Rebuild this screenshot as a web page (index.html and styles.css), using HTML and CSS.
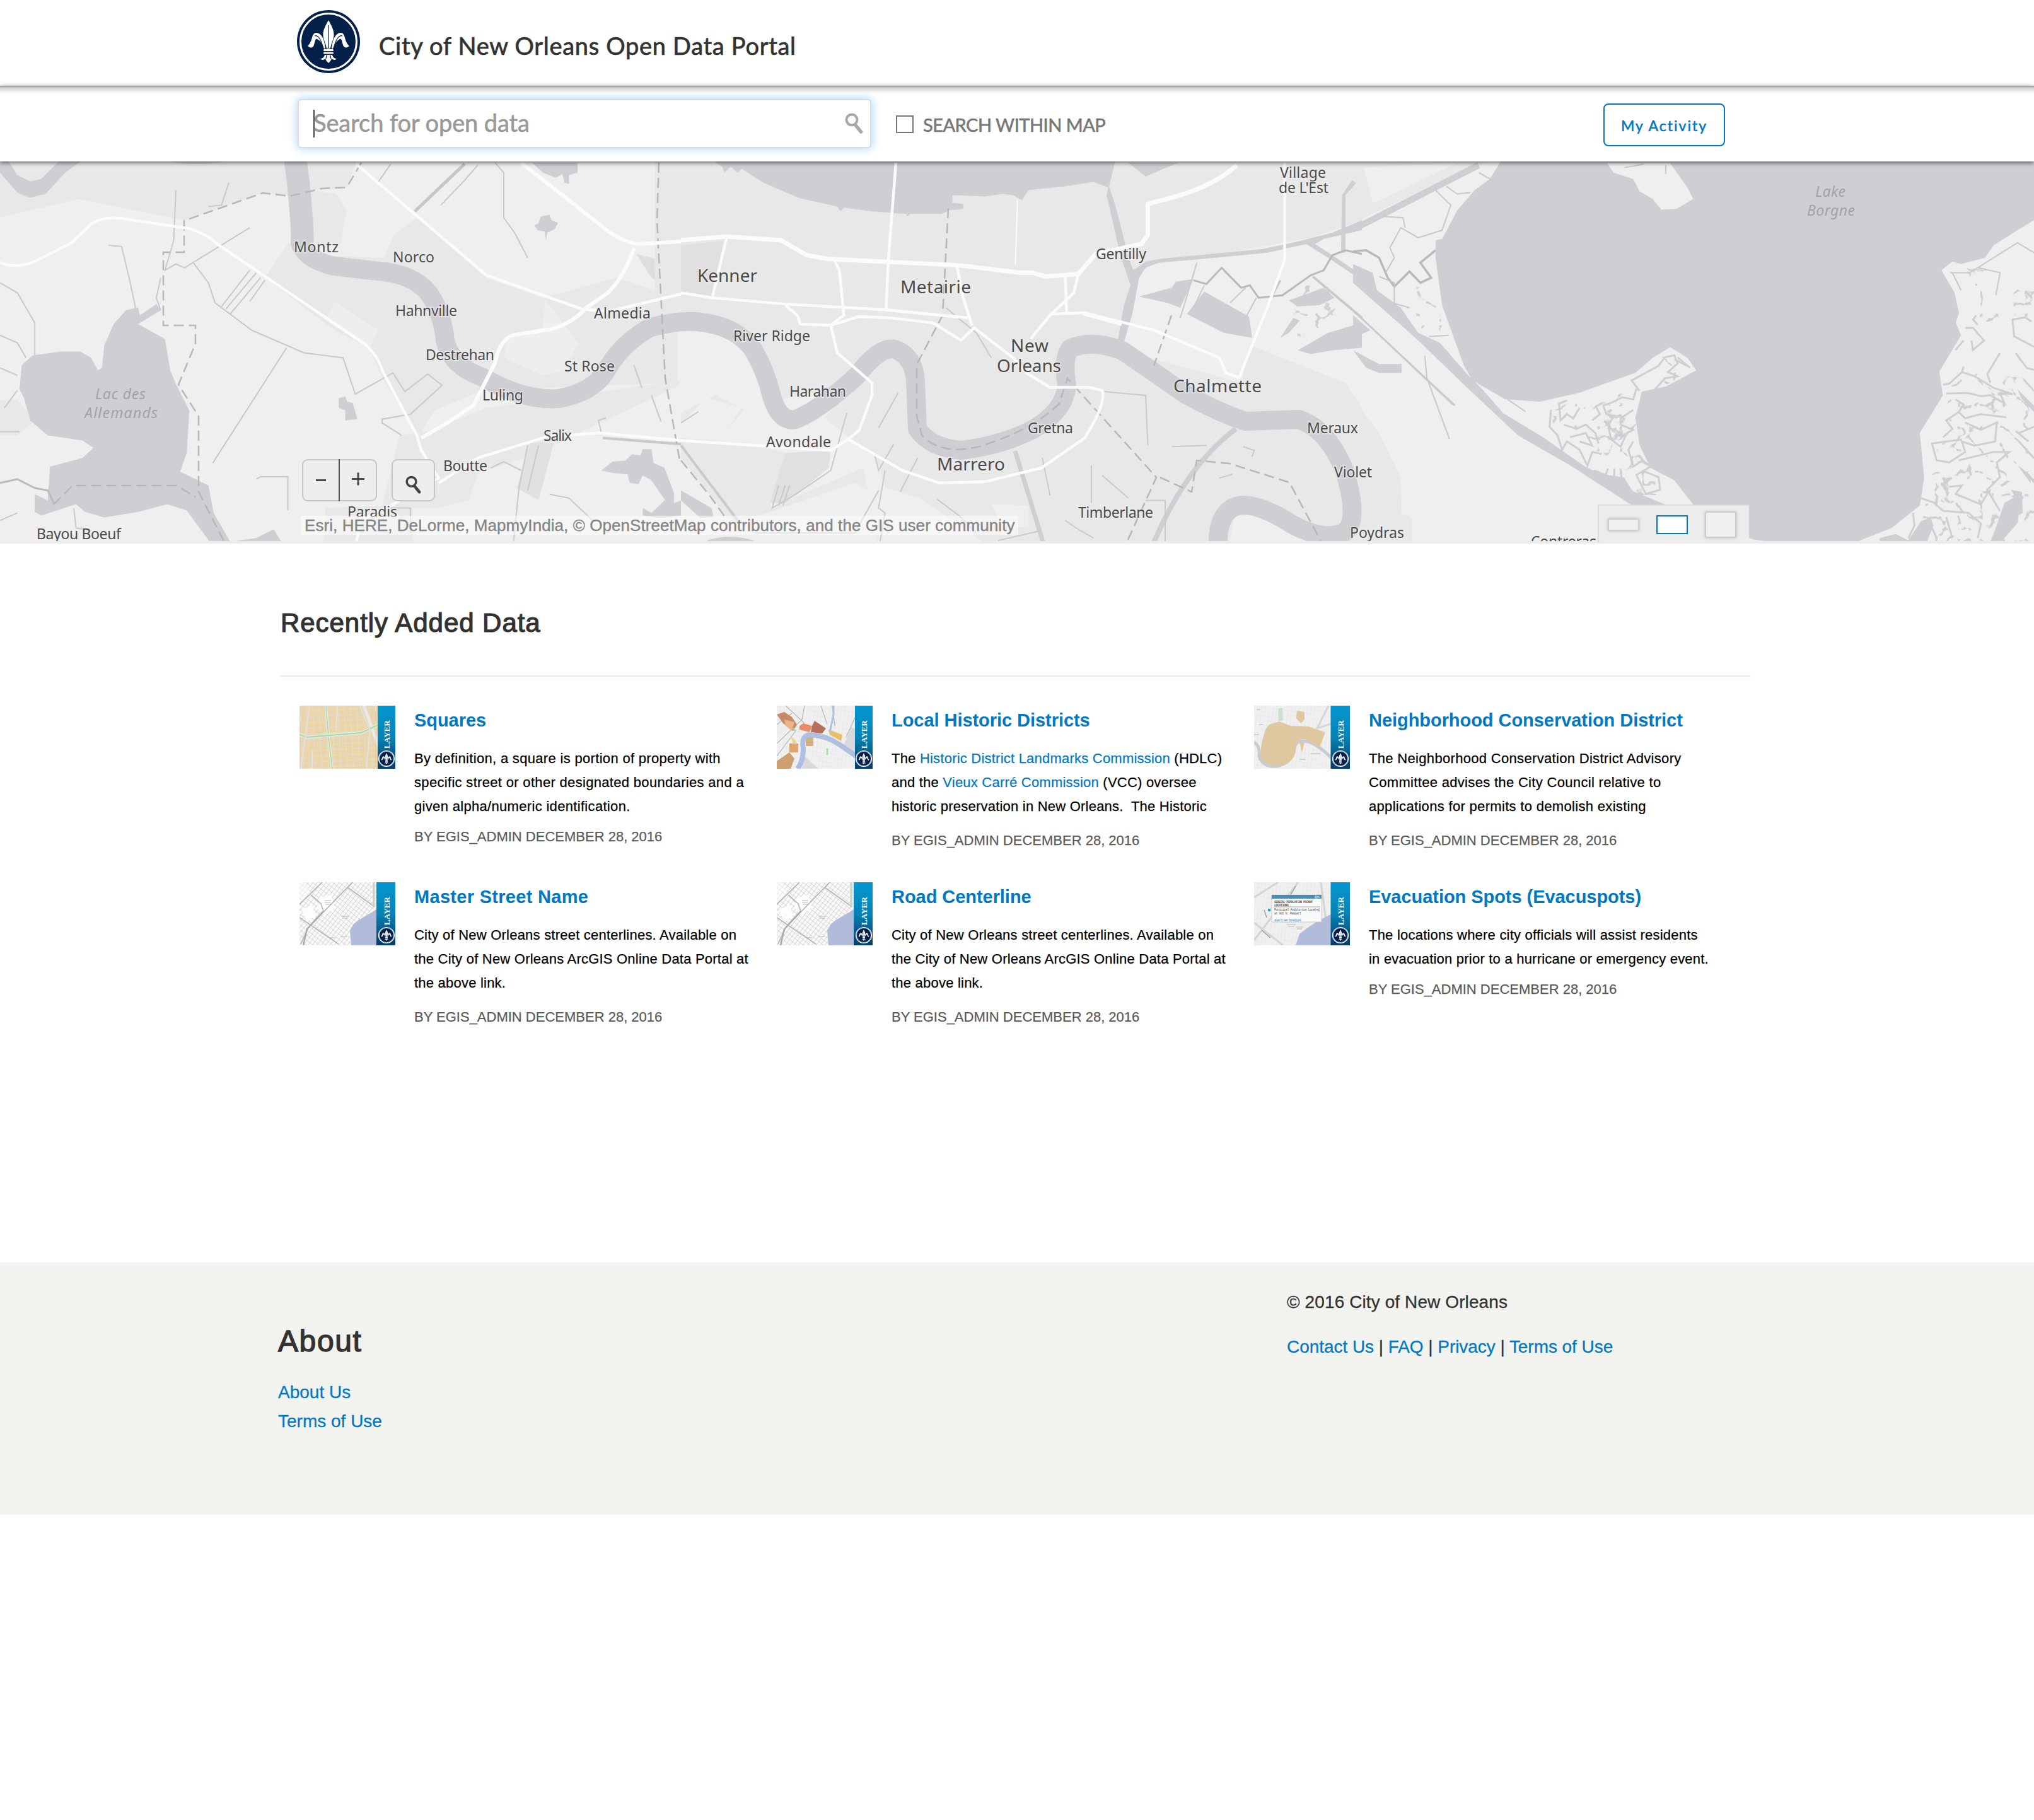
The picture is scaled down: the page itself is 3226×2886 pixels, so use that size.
FILE: index.html
```html
<!DOCTYPE html>
<html lang="en">
<head>
<meta charset="utf-8">
<title>City of New Orleans Open Data Portal</title>
<link rel="stylesheet" href="styles.css">
</head>
<body>
<svg class="defs" width="0" height="0" aria-hidden="true">
  <defs>
    <symbol id="seal" viewBox="0 0 100 100">
      <circle cx="50" cy="50" r="50" fill="#03204a"/>
      <circle cx="50" cy="50" r="44.500" fill="none" stroke="#fff" stroke-width="3"/>
      <g fill="#fff">
        <path d="M50 16C45 25 41 32 41.500 40C42 48 46 53 47 61H53C54 53 58 48 58.500 40C59 32 55 25 50 16Z"/>
        <path d="M45 61C44 49 40 37 31 36C22 36 26 49 17 57C21 61 26 60 27 55C29 49 29 45 32 46C38 49 40 54 43 61Z"/>
        <path d="M55 61C56 49 60 37 69 36C78 36 74 49 83 57C79 61 74 60 73 55C71 49 71 45 68 46C62 49 60 54 57 61Z"/>
        <rect x="42" y="62" width="16" height="3" rx="1.500"/>
        <rect x="42" y="66.500" width="16" height="3" rx="1.500"/>
        <path d="M44 71H56C57 75 60 77 63 77C61 80 57 79 55 77C54 80 52 82 50 84C48 82 46 80 45 77C43 79 39 80 37 77C40 77 43 75 44 71Z"/>
      </g>
      <g fill="none" stroke="#03204a">
        <path d="M50 24V60M46 77L47.500 71M54 77L52.500 71" stroke-width="1.200"/>
        <path d="M41 58C38 46 33 39 28 41M59 58C62 46 67 39 72 41" stroke-width="1.200"/>
      </g>
    </symbol>
    <symbol id="lens" viewBox="0 0 30 34">
      <circle cx="11" cy="11" r="8.500" fill="none" stroke="currentColor" stroke-width="4"/>
      <path d="M16.500 19L25.500 30" stroke="currentColor" stroke-width="5.500" stroke-linecap="round"/>
    </symbol>
    <linearGradient id="band" x1="0" y1="0" x2="0" y2="1">
      <stop offset="0" stop-color="#0597d2"/><stop offset=".5" stop-color="#0683b4"/><stop offset="1" stop-color="#053a68"/>
    </linearGradient>
    <symbol id="layer-tag" viewBox="0 0 28 100">
      <rect width="28" height="100" fill="url(#band)"/>
      <text class="tag-text" transform="translate(18.500 68) rotate(-90)" textLength="45">LAYER</text>
      <use href="#seal" x="1" y="71" width="26" height="26"/>
      <circle cx="14" cy="84" r="12.500" fill="none" stroke="#fff" stroke-width="1.200"/>
    </symbol>
    <pattern id="blocks" width="10" height="9" patternUnits="userSpaceOnUse" patternTransform="rotate(-3)">
      <rect width="10" height="9" fill="#ebd5a6"/><path d="M0 0H10M0 0V9" stroke="#e2dcd2" stroke-width="2"/>
    </pattern>
    <pattern id="streets" width="5.500" height="6.500" patternUnits="userSpaceOnUse" patternTransform="rotate(38)">
      <rect width="5.500" height="6.500" fill="#fafafa"/><path d="M0 0H5.500M0 0V6.500" stroke="#bdbdbd" stroke-width="1"/>
    </pattern>
    <pattern id="faint" width="6" height="7" patternUnits="userSpaceOnUse" patternTransform="rotate(8)">
      <rect width="6" height="7" fill="#f0f0f0"/><path d="M0 0H6M0 0V7" stroke="#e2e2e4" stroke-width=".8"/>
    </pattern>
    <symbol id="thumb-streets" viewBox="0 0 152 100">
      <rect width="152" height="100" fill="url(#streets)"/>
      <path d="M8 0H0V34L14 20L34 44Z" fill="#fbfbfb" opacity=".5"/>
      <path d="M32 24L50 20L56 40L40 52L28 40Z" fill="#fdfdfd"/>
      <path d="M4 44L20 36L26 52L12 64Z" fill="#fdfdfd"/>
      <path d="M0 35L36 0M18 20L34 34L38 46M0 56L62 98M76 8L118 38M84 0L14 72L2 98" fill="none" stroke="#b9bab5" stroke-width="1.800"/>
      <path d="M38 46L12 74L6 100" fill="none" stroke="#a9aca3" stroke-width="2.400"/>
      <path d="M118 0V40" stroke="#ccd0c6" stroke-width="3"/>
      <path d="M124 38L100 58L86 72L92 76L118 46Z" fill="#fcfcfc"/>
      <path d="M124 42L104 54L94 60L86 66L80 76L82 100H124Z" fill="#b1bcda"/>
      <path d="M40 29H50M40 32H49M41 35H50M66 54H78M68 57H77M66 86H76M46 88H56" stroke="#a5a5a5" stroke-width=".8"/>
    </symbol>
    <filter id="creeks" x="0" y="0" width="1" height="1" color-interpolation-filters="sRGB">
      <feTurbulence type="turbulence" baseFrequency=".028 .028" numOctaves="3" seed="7" result="n"/>
      <feColorMatrix in="n" type="matrix" values="0 0 0 0 .812  0 0 0 0 .808  0 0 0 0 .827  -18 0 0 0 2.500" result="m"/>
      <feComposite in="m" in2="SourceAlpha" operator="in"/>
    </filter>
  </defs>
</svg>

<header class="masthead">
  <svg class="logo"><use href="#seal"/></svg>
  <h1 class="site-title">City of New Orleans Open Data Portal</h1>
</header>

<div class="searchbar">
  <div class="search-field"><span class="caret"></span><span class="placeholder">Search for open data</span><svg class="lens"><use href="#lens"/></svg></div>
  <label class="within"><span class="box"></span><span class="within-text">SEARCH WITHIN MAP</span></label>
  <button class="activity">My Activity</button>
</div>

<section class="map">
<svg class="map-art" viewBox="0 256 3226 602">
  <rect y="256" width="3226" height="602" fill="#efefef"/>
  <!-- built-up areas -->
  <g fill="#e8e8e8">
    <g transform="translate(0 250) scale(.6888 .3968)">
      <path d="M0 15H820L800 118L740 125L670 152L605 142L425 250L180 165L0 240Z"/>
      <path d="M715 130L775 145L798 210L785 345L700 350Z"/>
      <path d="M665 340L610 480L770 690L850 760L880 880L965 1110L1000 1010L1110 930L1560 900V560L1420 480L1250 560L1120 480L960 240L905 310L885 400L700 390Z"/>
      <path d="M770 575L870 690L850 765L750 650Z" fill="#eee"/>
      <path d="M1255 565L1330 740L1300 850L1250 870L1160 800L1170 710L1250 680Z" fill="#eee"/>
      <path d="M920 1110L880 1390L750 1400L745 1540H950V1400H1010L1080 1370L1100 1260L1210 1200L1560 915L1568 890L1120 1000L990 1090Z"/>
      <path d="M1465 385L1568 430V545L1500 480Z" fill="#dedede"/><path d="M1220 1140H1275L1240 1370L1190 1320Z" fill="#e1e1e1"/>
      <path d="M0 970H40L80 1050L40 1110H0Z"/>
    </g>
    <g transform="translate(1080 250) scale(.6888 .3968)">
      <path d="M-60 15H1568V250L1450 320L1190 400L1060 420L1040 520L1010 740L1080 800L1290 900L1310 750L1530 900L1568 1000V1540H700L550 1360L470 1320L450 1200L330 1040L400 900L150 1000L80 1140L200 1160L240 1180L205 1400L420 1240L455 1540H150L90 1400L0 1200V1020L100 930L20 890L65 690H-60Z"/>
      <path d="M0 350L105 330L70 560L0 535Z" fill="#e0e0e0"/><path d="M240 1180L345 1170L340 1240L240 1380H205Z" fill="#e0e0e0"/>
      <path d="M15 890L65 690L140 730L180 900L200 1010L150 1010Z" fill="#efefef"/><path d="M0 1060L60 960L140 1000L90 1130L0 1120Z" fill="#efefef"/>
      <path d="M130 1460L400 1300L450 1350V1540H130ZM470 1330L560 1370L540 1540H455ZM715 1385L800 1390V1480L740 1470Z" fill="#efefef"/>
      <path d="M1060 420L1430 350L1490 400V600L1310 750L1150 660L1050 600Z" fill="#efefef"/>
      <path d="M1262 1540L1275 1430L1310 1410L1440 1500L1470 1540Z" fill="#efefef"/>
    </g>
    <g transform="translate(2146 250) scale(.6888 .3968)">
      <path d="M0 15H310L0 260Z"/><path d="M25 40L240 20L75 160L45 180Z" fill="#efefef"/>
      <path d="M0 960L60 1100L110 1280L112 1420L135 1440V1540H0Z"/>
    </g>
  </g>
  <!-- lakes, bayous and the river -->
  <g fill="#cfced3">
    <g transform="translate(0 250) scale(.6888 .3968)">
      <path d="M0 15H20L40 70L70 95L95 85L135 15H185L150 60L105 145L68 160L40 140L0 60Z"/>
      <path d="M290 610L318 598L322 630L360 585L370 610L318 665L380 725L392 850L405 905L436 1010L430 1180L415 1255L480 1310L492 1420L530 1535L590 1520L630 1485L650 1540H485L430 1410L385 1385L320 1415L240 1438L195 1415L175 1385L95 1430L80 1415V1345L110 1370L115 1235L190 1200L215 1160L190 1130L110 1110L70 1050L55 960L45 925L50 830L75 790L140 775L185 775L210 800L225 850L235 840L240 750L262 665Z"/>
      <path d="M390 15Q450 35 520 15Z"/>
      <path d="M1225 20H1330V60L1310 70V105L1300 100L1295 65L1280 80L1250 60Z"/>
      <path d="M1230 270L1240 262L1245 235L1265 228L1270 250L1285 260L1278 285L1260 300L1257 330L1254 295L1238 290Z"/>
      <path d="M780 960L795 955L800 975L812 980L823 1045L795 1050V1010L780 1000Z"/>
      <path d="M1385 1250L1410 1215L1440 1210L1455 1185L1475 1190L1480 1165H1500L1505 1220L1530 1240L1552 1340V1400L1540 1390L1500 1290L1480 1270L1470 1305L1450 1300L1445 1265L1410 1260Z"/>
      <path d="M1480 1400L1500 1420L1530 1370L1545 1385L1568 1370V1430L1520 1440L1480 1430Z"/>
    </g>
    <g transform="translate(1080 250) scale(.6888 .3968)">
      <path d="M80 20L95 35L100 60L115 35L130 60L140 45L190 100L270 160L360 195L368 215L375 200L440 215L518 225L522 235L528 225L600 225L620 210L650 205V185L625 180V150L700 155L740 145L765 150L785 170L800 130L880 115L950 97L985 120L1000 15H80Z"/>
      <path d="M985 110L1000 190L1015 290L1030 400L1042 450L1070 415L1110 403L1220 385L1340 365L1420 335L1500 300L1568 250V290L1480 325L1460 345L1500 390L1568 470V490L1490 400L1440 345L1350 380L1230 400L1100 420L1070 440L1055 480L1040 620L1018 750L1005 740L1020 590L1035 510L1010 380L995 260L980 150Z"/>
      <path d="M1055 555L1130 520L1140 495L1180 485L1160 560L1150 600L1120 580ZM1205 535L1308 635L1315 720L1250 700L1165 625Z"/>
      <path d="M1400 570L1440 545L1480 520L1505 560L1470 590L1420 595ZM1380 720L1410 640L1425 650L1400 700ZM1420 770L1490 700L1568 660V760L1500 770L1450 785Z"/>
      <path d="M1030 20L1145 20L1070 75ZM1545 90L1555 100L1530 150V380H1520L1522 150Z"/>
      <path d="M60 1530Q110 1500 168 1530V1540H60ZM0 1330L70 1400L75 1435L45 1440L0 1370Z"/>
    </g>
    <g transform="translate(2146 250) scale(.6888 .3968)">
      <path d="M340 15H1568V250L1530 290L1475 350L1455 400L1400 425L1380 415L1355 450L1385 540L1395 620L1388 660L1400 710L1350 855L1358 950L1305 1100L1315 1280L1305 1390L1240 1480L1160 1535L980 1540L920 1525L790 1440L785 1390L740 1290L685 1240L660 1150L650 1040L665 935L720 915L790 850L770 800L730 757L690 800L650 860L520 940L430 975L350 965L275 890L255 830L228 700L205 590L190 400V330L205 325L240 210L280 130L315 85Z"/>
      <path d="M585 22L600 60L645 85L660 135L690 165L710 208L745 205L783 165L770 120L730 22Z" fill="#efefef"/>
      <path d="M0 425L45 460L55 530L110 600L150 700L200 740L260 860L300 930L345 1020L440 1120L530 1230L640 1330L720 1387H640L500 1230L380 1110L260 915L150 730L0 500Z"/>
      <path d="M0 630L40 690L0 720ZM0 770L60 825H112V860H60L30 840ZM1530 1230L1560 1270V1300ZM1500 1380L1540 1340L1530 1460L1490 1540L1480 1480Z"/>
    </g>
  </g>
  <g fill="none" stroke="#cfced3" stroke-linejoin="round">
    <path d="M468 256Q478 320 476 385Q485 412 530 422L600 430Q655 434 680 465Q702 496 706 540Q715 580 765 598Q830 636 886 632Q940 622 960 590Q985 545 1030 520Q1080 505 1120 512Q1170 520 1195 555Q1215 590 1223 625Q1235 670 1262 665Q1300 650 1360 595Q1395 548 1420 554Q1450 566 1452 605L1455 680Q1475 710 1525 714Q1590 706 1640 680Q1690 650 1692 610Q1685 570 1697 553Q1730 537 1780 556Q1830 590 1880 625Q1935 655 1975 668L2060 665Q2105 680 2132 745Q2158 830 2130 845Q2100 858 2050 832Q1985 790 1955 805Q1930 820 1932 865" stroke-width="30"/>
    <path d="M468 250Q478 320 480 385" stroke-width="36"/>
    <path d="M1960 680Q1880 740 1828 865" stroke-width="8"/>
    <path d="M2146 364L2345 262" stroke-width="10"/><path d="M1610 715L1655 862" stroke-width="7"/>
    <path d="M2146 492L2306 643" stroke-width="3"/>
  </g>
  <!-- marsh creeks -->
  <g filter="url(#creeks)" fill="#000">
    <path d="M2455 645L2520 635L2590 620L2595 680L2600 720L2625 750L2635 785L2590 785L2540 725L2470 690Z"/>
    <path d="M2605 580L2650 560L2680 588L2640 612Z"/>
    <path d="M3120 425L3165 430L3170 510L3125 510ZM3190 440H3226V520L3195 500ZM3100 590L3226 600V858H3000L3050 820L3060 770L3075 700Z"/>
    <path d="M2236 455L2278 455L2288 525L2250 520ZM2040 455L2110 450L2120 500L2060 540Z"/>
  </g>
  <g transform="translate(2440 500) scale(.5013 .3333)" fill="none" stroke="#cfced3" stroke-width="3">
    <path d="M320 360L295 310L380 240L400 200L430 190L440 230L410 270L440 290L400 300L370 350M440 200L480 250M430 210L470 240M310 350L300 400L265 390L240 410L205 430L215 470L240 480L220 520L230 590L260 625L280 560L300 545L260 520V490L300 450M180 430L195 470L170 500M90 405L65 420L70 500L90 470L110 490L130 440M40 450L35 530L60 570L75 640L90 600L130 640L155 715L170 650L200 660M300 600L285 640L300 720L330 690L355 720L310 760L340 850L385 830L380 770L330 740M80 520L120 540L150 520L180 560L190 610M100 580L150 560L170 620L130 600M220 730L210 770M240 730V780M260 730L265 800"/>
    <path d="M1385 0L1375 20L1390 45M1350 60H1375L1410 120L1375 165L1370 120M1345 120L1320 165M1560 30L1540 10L1500 20L1505 100L1568 150M1280 330L1300 325L1340 270L1345 245M1340 270L1380 290L1440 345L1500 375L1460 370L1475 420L1430 380L1400 385L1360 370L1290 372M1510 180L1545 250L1568 260M1430 320L1420 280L1460 180M1320 400L1345 425L1330 460L1350 490L1400 470L1480 485M1330 460L1290 500L1310 540L1280 580M1350 510L1400 545L1450 510L1445 600L1380 620L1340 600L1350 650L1300 700L1260 690L1245 610L1340 590M1330 690L1440 650L1490 650L1450 700L1460 770L1420 830L1460 930M1300 815L1340 810L1320 850L1400 900L1420 850M1210 870L1250 890L1280 930L1360 940L1400 990L1390 1060M1185 940L1190 1000L1170 1060M1230 960L1260 1060M1290 960L1310 1060M1520 560L1568 530M1520 600L1568 680M1510 550L1550 600"/>
  </g>
  <g transform="translate(2440 500) scale(.5013 .3333)" fill="#cfced3">
    <path d="M1515 350L1530 400L1568 460V430ZM1520 715L1545 760L1568 800V780ZM1495 830L1530 840L1532 940L1490 980L1460 1075H1430L1450 1000L1500 940L1515 880Z"/>
    <path d="M1080 1060L1130 1040L1170 1070L1210 980L1240 960L1250 1000L1230 1075H1080Z"/>
    <path d="M180 735L220 760L270 770L300 840L380 890H300L160 740Z"/>
  </g>
  <!-- minor streams, canals and tracks -->
  <g fill="none" stroke="#c9c9cb" stroke-width="2">
    <g transform="translate(0 250) scale(.6888 .3968)">
      <path d="M405 130L400 330L380 450L405 425L425 440L575 280M250 350L280 355L300 500L312 600M0 500L40 540L80 660V790M0 710L40 740L60 800M0 840L40 870M40 930L10 1000M0 1095H45"/>
      <path d="M445 420L480 500L495 580L580 690L700 780L790 800L818 945L905 860L932 935L985 865L1018 910L945 1025L880 1045V1060L925 1110M660 760L490 1220M510 595L575 450M520 605L590 460M530 625L600 480M575 575L610 490M370 480L360 560L370 610"/>
      <path d="M1140 20L1160 60V240L1185 300L1215 400M1100 30L1070 90L1015 190M900 25L870 100M480 195L510 190L527 100M1460 830L1478 920M1500 950L1522 1055M1395 1040L1378 1050L1385 1100M590 1285L600 1275H663V1410M1130 1240L1160 1215L1200 1250M1215 1150L1195 1320L1182 1540M1240 1150L1215 1330M1265 1345L1310 1360L1365 1450M900 1400H945V1500M0 1450L40 1420M170 1400L175 1480L210 1490"/>
      <path d="M1070 25L955 215" stroke="#c5c5ca" stroke-width="5"/>
      <path d="M1388 1120L1568 1145" stroke-width="4"/>
      <path d="M0 1300L40 1285L80 1320L110 1330L125 1385" stroke="#bbb" stroke-width="3"/>
    </g>
    <g transform="translate(1080 250) scale(.6888 .3968)">
      <path d="M1188 420L1150 640M1205 510L1180 600M1300 520L1265 580M1325 560L1300 640M610 600L680 700L715 800M500 940L455 1080M382 1020L345 1250L260 1350L210 1400L225 1310M240 1310L225 1390M250 1310L235 1390M490 1145L455 1250L445 1180M545 1200L505 1335M0 1060L40 1015M590 1365L640 1430L680 1500M832 1200L850 1350M945 1230V1380M970 1270L1030 1360M975 935L1070 950L1075 1150M1130 1155L1210 1150M1295 1155L1320 1170L1315 1195M1240 1280L1270 1265M170 1500H400L455 1330M885 1450L910 1480L950 1520M730 1530L830 1490M1070 1370H1115V1540M470 1250L455 1400L470 1420L458 1540"/>
      <path d="M1180 490L1210 505L1245 440L1290 520L1310 510L1330 560L1385 550L1450 470L1480 450L1500 390L1530 370L1568 385" stroke="#b9b9bd" stroke-width="3"/>
      <path d="M1455 475L1568 640M1360 555L1380 490M0 1150L135 1460" stroke-width="4" stroke="#c9c9ce"/>
    </g>
    <g transform="translate(2146 250) scale(.6888 .3968)">
      <path d="M0 375L30 370L60 400L80 480L95 515L130 455L155 500L180 480L155 420L190 370" stroke="#b9b9bd" stroke-width="3.500"/>
      <path d="M190 130L225 190L205 290L150 320L110 280L85 360L95 400L75 460M70 235L115 240L120 280M215 115L240 145L270 140M290 60L320 90M0 610L235 990L225 980M165 790L170 880L222 1125M355 965L397 1015M90 580L130 600M175 715L220 710M60 475L95 500V580"/>
      <path d="M1375 460H1420L1530 340L1568 380M1380 460L1400 530M1440 440L1490 460L1480 550M625 40L670 25M720 30V65"/>
    </g>
  </g>
  <!-- parish boundaries -->
  <g fill="none" stroke="#b7b7b7" stroke-width="2.500" stroke-dasharray="16 8">
    <path d="M573 258L550 297L510 299L460 311L417 306L292 350V400H259V516H310V545L283 610L315 660V780L355 858M85 800L115 770H280L310 788"/>
    <path d="M1045 258L1042 350L1055 600L1078 730M1504 330L1495 500L1454 578V660L1462 690Q1495 725 1560 706Q1640 680 1680 640L1693 600L1834 757L1788 858M1858 500L1830 580M1840 757L1890 780L1898 730L1950 735L2045 765L2095 858M1080 730L1125 785L1150 820"/>
  </g>
  <!-- highways -->
  <g fill="none" stroke="#fbfbfb" stroke-linejoin="round">
    <g transform="translate(0 250) scale(.6888 .3968)" stroke-width="4.500">
      <path d="M0 420Q40 445 80 415L165 340L210 265Q240 230 290 245L440 285Q480 310 500 345L840 745Q870 790 880 850L960 1110L970 1170L1010 1280L900 1390L830 1450L820 1540"/>
      <path d="M1200 20L1405 300Q1440 340 1470 345L1568 335M1460 360Q1440 470 1400 540L1350 600Q1320 660 1270 685L1180 710Q1150 730 1140 820L1090 990L1030 1060L970 1120" stroke-width="6"/>
      <path d="M820 25L1120 470L1340 605L1400 615L1568 545M1010 1300L1100 1200L1260 1115L1380 1100L1568 1130"/>
    </g>
    <g transform="translate(1080 250) scale(.6888 .3968)" stroke-width="4.500">
      <path d="M0 330L105 315L230 330L290 390L340 405L640 430L780 460H810L840 475L915 465L955 385L1060 345L1075 310V185L1140 155Q1230 110 1280 30" stroke-width="7"/>
      <path d="M495 20L478 400L472 610M105 320L72 560L0 540M72 560L240 585L470 608L660 640M240 590L268 630L275 665L345 670L375 630L365 450L350 400M345 670L410 635L480 640L580 660L645 730L675 680L765 800M635 430L650 560L670 670M345 670L360 780L440 900V950L410 1090L385 1125L345 1170L0 1130M385 1125L510 1250L595 1300L700 1295L830 1240L930 1120Q980 980 970 930L940 918H850L795 860L765 800M805 725L850 630L905 540L915 465M885 475L888 620M850 625L930 620L1090 690L1240 800L1255 860L1285 880L1350 600L1390 410V20"/>
      <path d="M925 622L1015 665" stroke-width="6"/>
      <path d="M775 170L770 430" stroke-width="2"/>
    </g>
  </g>
  <g class="town">
    <text x="466" y="400" textLength="71">Montz</text><text x="623" y="416" textLength="66">Norco</text>
    <text x="627" y="501" textLength="98">Hahnville</text><text x="942" y="505" textLength="90">Almedia</text>
    <text x="675" y="571" textLength="109">Destrehan</text><text x="895" y="589" textLength="80">St Rose</text>
    <text x="765" y="635" textLength="65">Luling</text><text x="862" y="699" textLength="45">Salix</text>
    <text x="703" y="747" textLength="70">Boutte</text><text x="551" y="820" textLength="79">Paradis</text>
    <text x="58" y="855" textLength="134">Bayou Boeuf</text><text x="1163" y="541" textLength="122">River Ridge</text>
    <text x="1252" y="629" textLength="90">Harahan</text><text x="1215" y="709" textLength="103">Avondale</text>
    <text x="1630" y="687" textLength="72">Gretna</text><text x="1710" y="821" textLength="119">Timberlane</text>
    <text x="1738" y="411" textLength="80">Gentilly</text><text x="2030" y="282" textLength="73">Village</text>
    <text x="2028" y="306" textLength="79">de L'Est</text><text x="2073" y="687" textLength="81">Meraux</text>
    <text x="2116" y="757" textLength="60">Violet</text><text x="2141" y="853" textLength="86">Poydras</text>
    <text x="2428" y="867" textLength="104">Contreras</text>
  </g>
  <g class="town city">
    <text x="1106" y="447" textLength="95">Kenner</text><text x="1428" y="465" textLength="112">Metairie</text>
    <text x="1603" y="558" textLength="60">New</text><text x="1581" y="590" textLength="102">Orleans</text>
    <text x="1486" y="746" textLength="108">Marrero</text><text x="1861" y="622" textLength="140">Chalmette</text>
  </g>
  <g class="town lake">
    <text x="151" y="633" textLength="80">Lac des</text><text x="134" y="663" textLength="116">Allemands</text>
    <text x="2879" y="312" textLength="48">Lake</text><text x="2866" y="342" textLength="76">Borgne</text>
  </g>
</svg>
  <div class="map-tools">
    <div class="zoom"><svg viewBox="0 0 119 67"><path d="M59 0V67" stroke="#555" stroke-width="2"/><path d="M22 33.500H38M79 31.500H99M89 21.500V41.500" stroke="#4a4a4a" stroke-width="3"/></svg></div>
    <div class="find"><svg><use href="#lens"/></svg></div>
  </div>
  <div class="credits">Esri, HERE, DeLorme, MapmyIndia, © OpenStreetMap contributors, and the GIS user community</div>
  <div class="sizes"><span class="size small"></span><span class="size medium"></span><span class="size large"></span></div>
</section>

<main class="content">
  <h2 class="heading">Recently Added Data</h2>
  <div class="cards">
    <article class="card">
      <svg class="thumb" viewBox="0 0 152 100"><rect width="152" height="100" fill="url(#blocks)"/>
        <path d="M42 0L46 50L52 100" fill="none" stroke="#e9e9e9" stroke-width="4"/><path d="M42 0L46 50L52 100" fill="none" stroke="#a7dca0" stroke-width="1.500"/>
        <path d="M0 46L12 50L98 43L126 30M102 0L126 66" fill="none" stroke="#e9e9e9" stroke-width="5"/><path d="M0 46L12 50L98 43L126 30" fill="none" stroke="#9fdc9d" stroke-width="2"/>
        <path d="M60 0L58 40M96 0L112 40L106 100M16 0L2 100M20 70V100" fill="none" stroke="#e4dfd9" stroke-width="2.500"/>
        <use href="#layer-tag" x="124" width="28" height="100"/></svg>
      <div class="body"><h3>Squares</h3><p class="desc">By definition, a square is portion of property with<br>specific street or other designated boundaries and a<br>given alpha/numeric identification.</p><p class="meta tight">BY EGIS_ADMIN DECEMBER 28, 2016</p></div>
    </article>
    <article class="card">
      <svg class="thumb" viewBox="0 0 152 100"><rect width="152" height="100" fill="url(#faint)"/>
        <path d="M0 30L24 12M0 60L40 22L44 0M0 80L30 40M14 0L44 28M70 0L80 30M92 32L88 0M110 50L128 10" fill="none" stroke="#b5b5b5" stroke-width="1.200"/>
        <path d="M0 14L12 10L24 18L32 30L26 40L10 28Z" fill="#c68a68"/><path d="M12 22L28 26L24 40L14 32Z" fill="#ecb486"/>
        <path d="M36 32L42 28L56 32L52 42L36 38Z" fill="#e98b69"/><path d="M56 32L60 24L78 36L72 44L54 42Z" fill="#b5705c"/>
        <path d="M82 38L104 46L102 56L84 46Z" fill="#e6bf66"/><path d="M46 48H58V64H46Z" fill="#cfb183"/><path d="M20 60H34V74H20Z" fill="#dfa46e"/><path d="M22 48L32 58L26 60Z" fill="#eed878"/>
        <path d="M0 88L20 74L28 84L22 100H0Z" fill="#cf9f70"/><path d="M42 78L66 100H40ZM106 64L118 34L126 38V78Z" fill="#d9d9dd"/>
        <path d="M33 100Q42 88 42 68Q38 46 54 46Q80 48 100 62L126 80" fill="none" stroke="#afbfe2" stroke-width="8"/>
        <path d="M90 0V14L84 42" stroke="#afbfe2" stroke-width="3" fill="none"/><path d="M80 68V78M26 36L30 40" stroke="#a9dda1" stroke-width="3"/>
        <use href="#layer-tag" x="124" width="28" height="100"/></svg>
      <div class="body"><h3>Local Historic Districts</h3><p class="desc narrow">The <a>Historic District Landmarks Commission</a> (HDLC)<br>and the <a>Vieux Carré Commission</a> (VCC) oversee<br>historic preservation in New Orleans.&nbsp; The Historic</p><p class="meta">BY EGIS_ADMIN DECEMBER 28, 2016</p></div>
    </article>
    <article class="card">
      <svg class="thumb" viewBox="0 0 152 100"><rect width="152" height="100" fill="url(#faint)"/>
        <path d="M0 58Q10 64 8 80Q14 98 36 96Q62 90 64 68Q66 54 80 56Q98 58 124 84" fill="none" stroke="#cacad2" stroke-width="5"/>
        <path d="M24 30L40 25L58 32L86 33L113 42L104 66L84 54Q66 50 66 64Q68 86 46 94Q16 98 10 80L12 58L18 38Z" fill="#dfc79f"/>
        <path d="M68 8L80 10V22L74 28L67 20ZM72 58H80L76 74Z" fill="#dfc79f"/>
        <path d="M4 6H10M0 46H8M72 85H82M90 76H106M8 30H14" stroke="#b5b5b5"/><path d="M42 4V24" stroke="#cfdfd0" stroke-width="7"/>
        <path d="M118 0L100 36L124 28" fill="none" stroke="#d5d5da" stroke-width="3"/>
        <use href="#layer-tag" x="123" width="28" height="100"/><path d="M121.500 0H124V100H121.500ZM150 0H152V100H150Z" fill="url(#band)"/></svg>
      <div class="body"><h3>Neighborhood Conservation District</h3><p class="desc">The Neighborhood Conservation District Advisory<br>Committee advises the City Council relative to<br>applications for permits to demolish existing</p><p class="meta">BY EGIS_ADMIN DECEMBER 28, 2016</p></div>
    </article>
    <article class="card">
      <svg class="thumb" viewBox="0 0 152 100"><use href="#thumb-streets"/><use href="#layer-tag" x="124" width="28" height="100"/><path d="M122 0H125V100H122Z" fill="url(#band)"/></svg>
      <div class="body"><h3 class="wide">Master Street Name</h3><p class="desc narrow">City of New Orleans street centerlines. Available on<br>the City of New Orleans ArcGIS Online Data Portal at<br>the above link.</p><p class="meta">BY EGIS_ADMIN DECEMBER 28, 2016</p></div>
    </article>
    <article class="card">
      <svg class="thumb" viewBox="0 0 152 100"><use href="#thumb-streets"/><use href="#layer-tag" x="124" width="28" height="100"/><path d="M122 0H125V100H122Z" fill="url(#band)"/></svg>
      <div class="body"><h3>Road Centerline</h3><p class="desc narrow">City of New Orleans street centerlines. Available on<br>the City of New Orleans ArcGIS Online Data Portal at<br>the above link.</p><p class="meta">BY EGIS_ADMIN DECEMBER 28, 2016</p></div>
    </article>
    <article class="card">
      <svg class="thumb" viewBox="0 0 152 100"><rect width="152" height="100" fill="url(#faint)"/>
        <path d="M0 24L38 0M70 0L0 92M0 64L46 100M106 0L114 60" fill="none" stroke="#d3d6cf" stroke-width="3"/>
        <path d="M66 6L58 20M12 76L26 88M16 44L20 56" stroke="#9b9b9b" stroke-width="1.400"/>
        <path d="M124 50L104 60L88 70L72 82L66 100H124Z" fill="#b1bcda"/>
        <rect x="28" y="20" width="79" height="43" fill="#fafafa" stroke="#c4c4c4" stroke-width=".8"/><rect x="28" y="20" width="79" height="6" fill="#4d8cb5"/>
        <path d="M97 22H100V25H97ZM102 22L105 25M105 22L102 25" stroke="#fff" stroke-width=".7" fill="none"/><path d="M31 39H105" stroke="#888" stroke-width=".8"/>
        <g class="tiny"><text x="32" y="33" textLength="61" font-weight="bold">GENERAL POPULATION PICKUP</text><text x="32" y="37.500" textLength="23" font-weight="bold">LOCATIONS</text><text x="32" y="45" textLength="72">Municipal Auditorium Located</text><text x="32" y="51" textLength="43">at 801 N. Rampart</text><text x="32" y="61.500" textLength="43" fill="#3a86b5">Zoom to  Get Directions</text></g>
        <rect x="22" y="42" width="4" height="4" fill="#08a9c9"/><path d="M52 67H66M54 70H64M66 71H78M68 74H76" stroke="#aaa" stroke-width=".8"/>
        <use href="#layer-tag" x="123" width="28" height="100"/><path d="M121.500 0H124V100H121.500ZM150 0H152V100H150Z" fill="url(#band)"/></svg>
      <div class="body"><h3>Evacuation Spots (Evacuspots)</h3><p class="desc narrow">The locations where city officials will assist residents<br>in evacuation prior to a hurricane or emergency event.</p><p class="meta tight">BY EGIS_ADMIN DECEMBER 28, 2016</p></div>
    </article>
  </div>
</main>

<footer class="footer">
  <div class="about"><h2>About</h2><a>About Us</a><a>Terms of Use</a></div>
  <div class="legal"><p>© 2016 City of New Orleans</p><p class="links"><a>Contact Us</a> | <a>FAQ</a> | <a>Privacy</a> | <a>Terms of Use</a></p></div>
</footer>
</body>
</html>
```
FILE: styles.css
```css
* { box-sizing: border-box; }
body { margin: 0; background: #fff; color: #323232; font-family: "Liberation Sans", Arial, sans-serif; }
h1, h2, h3, p { margin: 0; font-weight: normal; }
a { color: #0079c1; }
svg { display: block; }
.defs { position: absolute; }

.masthead { display: flex; align-items: flex-start; height: 136px; padding-left: 471px; background: #fff; }
.logo { width: 100px; height: 100px; margin-top: 16px; }
.site-title { margin: 47px 0 0 30px; font: 38px/50px Lato, sans-serif; letter-spacing: .7px; color: #323232; white-space: nowrap; -webkit-text-stroke: .7px #323232; }

.searchbar { position: relative; z-index: 2; display: flex; align-items: flex-start; height: 120px; padding: 21px 490px 0 472px; background: linear-gradient(#a5a5a5 0, #a9a9a9 2px, #cfcfcf 3px, #fff 12px); box-shadow: 0 2px 7px rgba(0,0,0,.6); }
.search-field { display: flex; align-items: center; width: 910px; height: 78px; padding: 0 10px 0 23px; border: 2px solid #dcdcdc; border-radius: 6px; background: #fff; box-shadow: 0 0 14px 2px #b5dcfb; }
.caret { width: 2px; height: 44px; margin-right: -2px; background: #444; }
.placeholder { flex: 1; padding-bottom: 4px; font: 38px/50px Lato, sans-serif; letter-spacing: -.1px; color: #999; -webkit-text-stroke: .6px #999; }
.lens { width: 30px; height: 34px; color: #a9a9a9; }
.within { display: flex; align-items: center; margin: 15px auto 0 39px; height: 50px; }
.box { width: 28px; height: 28px; border: 2px solid #777; }
.within-text { margin: 1px 0 0 15px; font: 29px/40px Lato, sans-serif; letter-spacing: -.5px; color: #777; -webkit-text-stroke: .6px #777; }
.activity { width: 193px; height: 68px; margin-top: 7px; padding: 2px 0 0; border: 2px solid #0079c1; border-radius: 8px; background: #fff; color: #0079c1; font: 23px/40px Lato, sans-serif; letter-spacing: 2px; white-space: nowrap; -webkit-text-stroke: .6px #0079c1; }

.map { position: relative; height: 606px; background: #ececec; }
.map-art { width: 3226px; height: 602px; overflow: hidden; }
.map-art path { vector-effect: non-scaling-stroke; }
.town { font: 23px "Noto Sans", sans-serif; fill: #4a4a4a; stroke: #efefef; stroke-width: 3px; stroke-opacity: .7; paint-order: stroke; }
.city { font-size: 28px; }
.lake { font-style: italic; fill: #a3a2a8; stroke: none; }
.map-tools { position: absolute; left: 479px; top: 472px; display: flex; gap: 23px; }
.zoom, .find { height: 67px; border: 2px solid #c6c6c6; border-radius: 9px; background: #eeeeee; }
.zoom { width: 119px; }
.zoom svg { width: 119px; height: 67px; margin: -2px; }
.find { width: 69px; padding: 24px 0 0 20px; color: #444; }
.find svg { width: 26px; height: 30px; }
.credits { position: absolute; left: 477px; top: 562px; height: 30px; padding: 0 5px 0 6px; background: rgba(255,255,255,.5); font-size: 26px; line-height: 31px; letter-spacing: .07px; color: #858585; white-space: nowrap; -webkit-text-stroke: .4px #858585; }
.sizes { position: absolute; left: 2534px; top: 544px; display: flex; align-items: center; justify-content: space-between; width: 240px; height: 60px; padding: 1px 20px 0 14px; border: solid #dcdcdc; border-width: 2px 0 0 2px; background: #ececec; }
.size { width: 50px; border: 2px solid #cdcdcd; border-radius: 3px; background: #efefef; box-shadow: 0 0 4px #bbb; }
.small { height: 20px; }
.medium { height: 30px; border-color: #0079c1; border-radius: 0; background: #fff; box-shadow: none; }
.large { height: 42px; }

.content { width: 2332px; height: 1140px; margin-left: 445px; padding-top: 97px; }
.heading { height: 114px; border-bottom: 2px solid #ebebeb; font-size: 42px; line-height: 58px; letter-spacing: .95px; -webkit-text-stroke: 1.2px #323232; }
.cards { display: grid; grid-template-columns: repeat(3, 757px); grid-auto-rows: 280px; padding: 46px 0 0 30px; margin-right: -20px; }
.card { display: flex; align-items: flex-start; gap: 30px; }
.thumb { flex: none; width: 152px; height: 100px; }
.tag-text { font: bold 13px "Liberation Serif", serif; fill: #fff; }
.tiny { font: 5px "Liberation Mono", monospace; fill: #555; }
.body { padding-top: 5px; white-space: nowrap; }
.body h3 { margin-bottom: 24px; font-weight: bold; font-size: 29px; line-height: 36px; letter-spacing: -.05px; color: #0079c1; }
.body .wide { letter-spacing: .3px; }
.desc { font-size: 22px; line-height: 38px; letter-spacing: .32px; color: #000; -webkit-text-stroke: .25px; }
.narrow { letter-spacing: .22px; }
.meta { margin-top: 20px; font-size: 22px; line-height: 30px; color: #5a5a5a; -webkit-text-stroke: .25px; }
.meta.tight { margin-top: 14px; }

.footer { display: flex; height: 400px; background: #f2f3ee; font-size: 28px; -webkit-text-stroke: .3px; }
.about { display: flex; flex-direction: column; width: 1600px; margin-left: 441px; padding-top: 95px; }
.about h2 { margin-bottom: 28px; font-size: 48px; line-height: 60px; letter-spacing: 1.6px; -webkit-text-stroke: 1.4px #323232; }
.about a { line-height: 46px; }
.legal { padding-top: 40px; }
.legal p { height: 71px; line-height: 46px; letter-spacing: .1px; white-space: nowrap; }
.legal .links { letter-spacing: -.05px; }
```
